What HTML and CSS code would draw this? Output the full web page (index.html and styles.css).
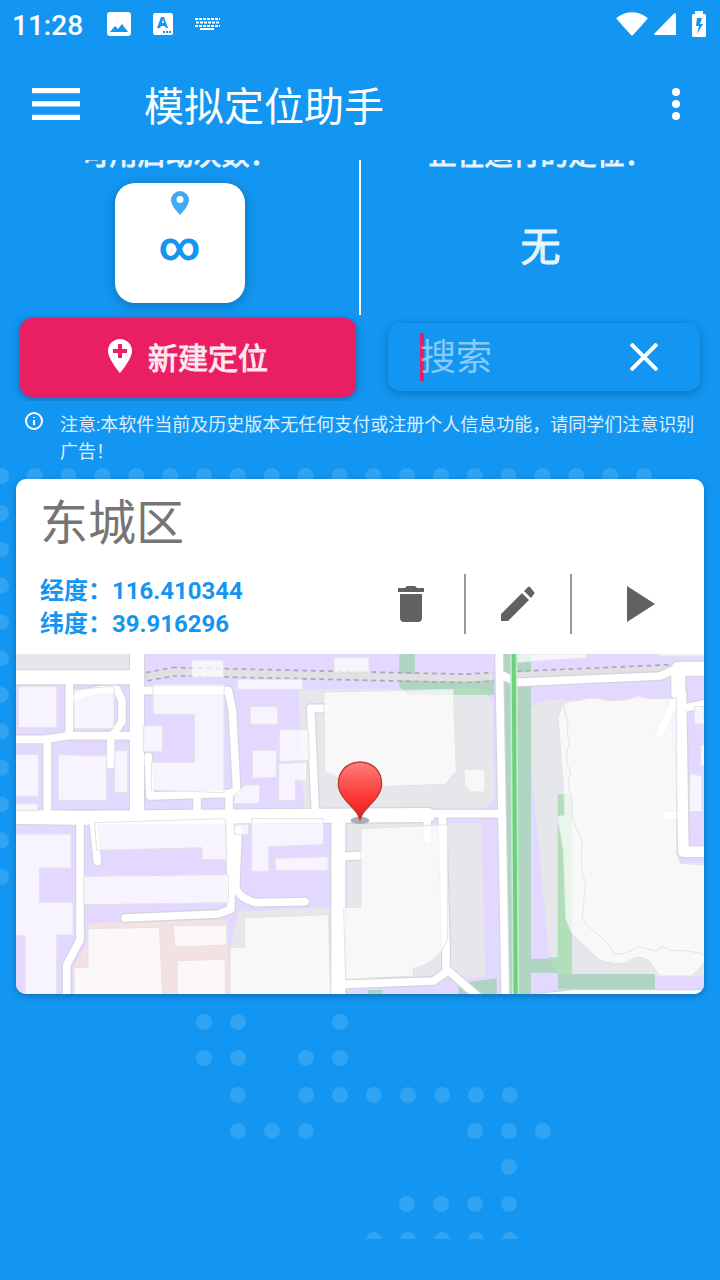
FILE: index.html
```html
<!DOCTYPE html>
<html lang="zh-CN">

<head>
  <meta charset="UTF-8">
  <meta name="viewport" content="width=device-width, initial-scale=1.0">
  <title>模拟定位助手</title>
  <link rel="stylesheet" href="styles.css">
</head>

<body>
  <!-- 背景点阵 -->
  <svg class="dots" width="720" height="1239" viewBox="0 0 720 1239" aria-hidden="true">
    <path d="M1 476H645" pathLength="647" />
    <path d="M1 513V878" pathLength="341" />
    <path d="M204 1022h35M340 1022h1M204 1058h35M306 1058h35M238 1095h1M306 1095h205M238 1131h70M475 1131h69M509 1167h1M407 1204h104M374 1240h138" />
  </svg>

  <div class="status">
    <span class="clock">11:28</span>
    <svg class="picture" width="24" height="24" viewBox="0 0 24 24">
      <path fill-rule="evenodd" d="M3 0h18a3 3 0 0 1 3 3v18a3 3 0 0 1-3 3H3a3 3 0 0 1-3-3V3a3 3 0 0 1 3-3zM3 20h18l-6-8-4 5-3-3z" />
    </svg>
    <svg class="ime" width="20" height="22" viewBox="0 0 20 22">
      <path fill-rule="evenodd" d="M2 0h16a2 2 0 0 1 2 2v18a2 2 0 0 1-2 2H2a2 2 0 0 1-2-2V2a2 2 0 0 1 2-2zM8 4L4 15h3l1-2h4l1 2h2L11 4zM9 10l1-4 1 4zM10 18v2h2v-2zM13 18v2h2v-2zM16 18v2h2v-2z" />
    </svg>
    <svg class="keyboard" width="25" height="14" viewBox="0 0 25 14">
      <path class="keys" d="M0 2h25M1 5.500h24M0 9h25" />
      <path d="M5 11h14v2H5z" />
    </svg>
    <svg class="wifi" width="32" height="24" viewBox="0 0 32 24">
      <path d="M1 5.500C10-1.500 22-1.500 31 5.500q1 1 0 2L17 23q-1 1-2 0L1 7.500q-1-1 0-2z" />
    </svg>
    <svg class="signal" width="22" height="22" viewBox="0 0 22 22">
      <path d="M20 .5q2-1 2 1V22H1q-2-1 0-2z" />
    </svg>
    <svg class="battery" width="14" height="26" viewBox="0 0 14 26">
      <path fill-rule="evenodd" d="M3 0h8v3h2l1 1v21l-1 1H1l-1-1V4l1-1h2zM5 7L4 15h3l-2 8 6-10H8l2-6z" />
    </svg>
  </div>

  <header class="toolbar">
    <button class="menu" aria-label="菜单">
      <svg width="48" height="32" viewBox="0 0 48 32">
        <path d="M0 0h48v5.300H0zM0 13.300h48v5.300H0zM0 26.700h48V32H0z" />
      </svg>
    </button>
    <h1>模拟定位助手</h1>
    <button class="more" aria-label="更多">
      <svg width="8" height="32" viewBox="0 0 8 32">
        <circle cx="4" cy="4" r="4" />
        <circle cx="4" cy="16" r="4" />
        <circle cx="4" cy="28" r="4" />
      </svg>
    </button>
  </header>

  <main>
    <section class="summary">
      <div class="col">
        <p class="label">可用启动次数：</p>
        <div class="count">
          <svg width="18" height="24" viewBox="0 0 18 24">
            <path fill-rule="evenodd" d="M9 0a9 9 0 0 1 9 9c0 6-9 15-9 15S0 15 0 9a9 9 0 0 1 9-9zM9 5a3 3 0 1 0 0 7 3 3 0 0 0 0-7z" />
          </svg>
          <span>∞</span>
        </div>
      </div>
      <div class="col">
        <p class="label">正在运行的定位：</p>
        <p class="running">无</p>
      </div>
    </section>

    <section class="actions">
      <button class="create">
        <svg width="24" height="34" viewBox="0 0 24 34">
          <path fill-rule="evenodd" d="M12 0a12 12 0 0 1 12 12c0 8-12 22-12 22S0 20 0 12A12 12 0 0 1 12 0zM10 5v5H5v4h5v5h4v-5h5v-4h-5V5z" />
        </svg>
        新建定位
      </button>
      <div class="search">
        <i class="caret"></i>
        <input type="text" placeholder="搜索" aria-label="搜索">
        <button class="clear" aria-label="清除">
          <svg width="28" height="28" viewBox="0 0 28 28">
            <path d="M1 1l26 26M27 1L1 27" />
          </svg>
        </button>
      </div>
    </section>

    <div class="notice">
      <svg width="18" height="18" viewBox="0 0 18 18">
        <circle cx="9" cy="9" r="8" />
        <path d="M9 8v5M9 5v1" />
      </svg>
      <p>注意:本软件当前及历史版本无任何支付或注册个人信息功能，请同学们注意识别广告！</p>
    </div>

    <article class="card">
      <h2>东城区</h2>
      <div class="detail">
        <p class="coords">经度：116.410344<br>纬度：39.916296</p>
        <div class="tools">
          <button aria-label="删除">
            <svg width="26" height="36" viewBox="0 0 26 36">
              <path d="M0 2h7l2-2h8l2 2h7v4H0zM2 8h22v24a4 4 0 0 1-4 4H6a4 4 0 0 1-4-4z" />
            </svg>
          </button>
          <button aria-label="编辑">
            <svg width="34" height="36" viewBox="0 0 34 36">
              <path d="M0 28L21 7l7 7L7 35H0zM23 5l4-4q1-1 2 0l4 5q1 1 0 2l-3 4z" />
            </svg>
          </button>
          <button aria-label="启动">
            <svg width="28" height="36" viewBox="0 0 28 36">
              <path d="M0 0l28 18L0 36z" />
            </svg>
          </button>
        </div>
      </div>

      <svg class="map" viewBox="48 12 2064 1020" role="img" aria-label="东城区地图">
        <defs>
          <linearGradient id="red" x1="0" y1="0" x2="0" y2="1">
            <stop offset="0" stop-color="#ff7d7a" />
            <stop offset=".6" stop-color="#fb3a37" />
            <stop offset="1" stop-color="#e02020" />
          </linearGradient>
          <g id="lanes">
            <path d="M208 100V255M40 268H135L205 257H400M142 275V490M222 145Q270 115 350 118L366 150V215L345 245 332 265V345" />
            <path d="M430 122H685L697 180 710 420 690 430 450 438 445 320M591 440V485M687 430V500M975 175H932L946 485" />
            <path d="M240 515V870L200 945V1045M280 515L292 635M690 500L693 778 655 792 375 804M714 540L707 715Q720 745 765 758L915 755" />
            <path d="M1030 620L1083 616M1281 500L1283 570M1327 495L1337 870M1030 1003L1300 993 1345 962 1440 1045M1338 870V960M1280 491H1500" />
            <path d="M1497 0L1516 1045M1505 75L1550 97 1980 78 2030 56M2050 175L2120 160M1980 250L2020 160M2000 497H2030M1600 1045L1720 1032H2120" />
          </g>
          <g id="streets">
            <path d="M411 0V500M40 82H411M40 501L240 503 1285 495M1015 500V1045M2130 56H2035V130" />
          </g>
        </defs>

        <rect class="land" x="48" y="12" width="2064" height="1020" />

        <g class="block">
          <path d="M48 12H388V58H48zM895 118H1455L1478 165 1483 440 1460 475H912zM1040 520H1444L1456 980 1040 1000zM715 785L990 772V1032H690V890z" />
          <path d="M1593 180Q1600 150 1650 150H2010L2040 640H2112V978H1717L1648 922 1593 340z" />
        </g>
        <path class="mall" d="M262 820L682 808 690 1032H222V950L262 880z" />
        <path class="park" d="M1198 12h46v78h238v44h-260l-24-24zM1508 12H1593V926H1674V972H1965V1018H1674V968H1593V1032H1508zM1376 1000L1490 985V1032H1376zM1104 1020h44v12h-44z" />
        <path class="grass" d="M1360 118H1455L1480 134H1360zM1646 922H1673V432H1716V972H1671z" />

        <path class="path-dash" d="M440 80L520 65 1080 78 1400 85 1480 80" />
        <path class="path-fill" d="M440 80L520 65 1080 78 1400 85 1480 80M1550 76L2010 58" />
        <path class="path-side" d="M1550 64L2015 44" />

        <use class="lane-edge" href="#lanes" />
        <path class="court-edge" d="M2043 130L2050 605H2130" />
        <use class="street-edge" href="#streets" />
        <use class="lane" href="#lanes" />
        <path class="court" d="M2043 130L2050 605H2130" />
        <use class="street" href="#streets" />

        <path class="rail-edge" d="M1541 0L1547 1045" />
        <path class="rail" d="M1541 0L1547 1045" />

        <g class="house">
          <path d="M55 110H170V233H55zM222 120L342 108V236H222zM40 314H115V440H40zM175 314L240 316H320V451H175zM344 302H382V428H344zM40 460H113V482H40z" />
          <path d="M575 30H671V82H575zM712 88H907V118H712zM1002 22H1107V67H1002zM459 104H672V428L454 420V337H584V193H459zM431 227H488V305H431z" />
          <path d="M750 170H832L834 223H752zM838 239H925L928 331 838 335zM757 301H829V382L757 385zM836 341L920 337V392H886V451H836zM702 437L735 405H779V461H702z" />
          <path d="M284 518L676 506 680 629H606V593L290 601zM704 523H746V554H704zM755 506H970V584L806 590V665H755zM824 625L984 620V662H828zM252 679L685 674V758L252 764z" />
          <path d="M40 552H213V654H118V757H219V855H170V1032H75V857H40zM264 836L478 832 488 1040H222V953H264zM520 828L680 825V885L524 891zM531 932L676 928V1040H531z" />
          <path d="M733 803L985 794 992 1040H690V892H733zM972 126L1360 118 1369 365 1355 380 1338 403 1080 412 974 365zM1392 358H1455V426H1412L1395 408z" />
          <path d="M1083 536L1343 524V870Q1310 945 1240 955V978L1037 988 1031 772H1083z" />
          <path d="M1553 12H1760V24L1553 37zM1975 12H2112V18H1975zM2083 170H2112V222H2083zM2102 285H2120V347H2102zM2070 370L2105 378V485H2068z" />
          <path d="M1690 160Q1720 150 1740 152 1780 135 1820 152H1860Q1900 145 1913 137 1940 152 2030 143V610L2040 640 2120 645V930L2075 978H1980L1945 930Q1910 910 1880 938 1850 948 1795 928L1715 850 1697 805 1690 600 1672 500 1694 495 1692 432 1674 200z" />
          <path class="contour" d="M1694 160Q1690 180 1705 220 1697 235 1709 280 1688 320 1712 370 1697 400 1717 450 1707 500 1747 575 1737 655 1757 700 1750 760 1747 800C1750 835 1800 840 1845 912Q1880 914 1915 890L1970 904Q1985 878 2010 902 2065 898 2112 914" />
        </g>

        <ellipse class="marker-shadow" cx="1080" cy="511" rx="28" ry="11" />
        <path class="marker" d="M1080 336C1119 336 1145 364 1145 402 1145 445 1090 475 1084 500L1080 510 1076 500C1070 475 1015 445 1015 402 1015 364 1041 336 1080 336z" />
      </svg>
    </article>
  </main>
</body>

</html>
```
FILE: styles.css
```css
* {
  margin: 0;
  padding: 0;
  box-sizing: border-box;
}

body {
  min-height: 100vh;
  background: #1296f1;
  color: #fff;
  font-family: Roboto, "Noto Sans CJK SC", sans-serif;
  position: relative;
}

button {
  border: none;
  background: none;
  color: inherit;
  font: inherit;
  cursor: pointer;
}

svg {
  display: block;
  flex: none;
  fill: currentColor;
}

/* 背景点阵 */
.dots {
  position: absolute;
  top: 0;
  left: 0;
  z-index: -1;
}

.dots path {
  fill: none;
  stroke: rgba(255, 255, 255, .13);
  stroke-width: 16;
  stroke-linecap: round;
  stroke-dasharray: 0 34;
}

/* 状态栏 */
.status {
  height: 48px;
  padding: 0 14px 0 12px;
  display: flex;
  align-items: center;
}

.clock {
  padding-top: 2px;
  font-size: 28px;
  font-weight: 500;
  margin-right: 24px;
}

.picture {
  margin-right: 22px;
}

.ime {
  margin-right: 22px;
}

.keys {
  stroke: #fff;
  stroke-width: 2;
  stroke-dasharray: 3 1;
}

.wifi {
  margin-left: auto;
  margin-right: 6px;
}

.signal {
  margin-right: 16px;
}

/* 标题栏 */
.toolbar {
  height: 112px;
  padding: 0 40px 0 32px;
  display: flex;
  align-items: center;
}

.toolbar h1 {
  flex: 1;
  margin-left: 64px;
  font-size: 40px;
  font-weight: 400;
}

/* 统计 */
.summary {
  height: 155px;
  display: flex;
  overflow: hidden;
}

.col {
  flex: 1;
  display: flex;
  flex-direction: column;
  align-items: center;
}

.col + .col {
  border-left: 2px solid #fff;
}

.label,
.running,
.create {
  font-weight: 400;
  -webkit-text-stroke: 1px currentColor;
}

.label {
  margin-top: -26px;
  line-height: 44px;
  font-size: 28px;
  opacity: .9;
}

.count {
  width: 130px;
  height: 120px;
  margin-top: 5px;
  padding-top: 8px;
  border-radius: 20px;
  background: #fff;
  color: #1296f1;
  box-shadow: 0 2px 12px rgba(0, 0, 0, .25);
  display: flex;
  flex-direction: column;
  align-items: center;
}

.count svg {
  opacity: .8;
}

.count span {
  line-height: 64px;
  font-size: 40px;
  font-weight: 700;
}

.running {
  line-height: 140px;
  font-size: 40px;
  opacity: .9;
}

/* 操作 */
.actions {
  padding: 3px 20px 4px;
  display: grid;
  grid-template-columns: 14fr 13fr;
  gap: 32px;
  overflow: hidden;
}

.create {
  height: 79px;
  padding-bottom: 3px;
  border-radius: 12px;
  background: #e91e63;
  color: #fde8ef;
  font-size: 30px;
  box-shadow: 0 2px 8px rgba(0, 0, 0, .3);
  display: flex;
  align-items: center;
  justify-content: center;
  gap: 16px;
}

.create svg {
  fill: #fff;
}

.search {
  min-width: 0;
  height: 68px;
  margin-top: 5px;
  padding: 0 42px 0 32px;
  border-radius: 12px;
  box-shadow: 0 2px 8px rgba(0, 0, 0, .25);
  display: flex;
  align-items: center;
}

.caret {
  width: 4px;
  height: 48px;
  margin-right: -4px;
  background: #e91e63;
}

.search input {
  flex: 1;
  min-width: 0;
  height: 54px;
  padding-top: 2px;
  border: none;
  outline: none;
  background: none;
  color: #fff;
  font: inherit;
  font-size: 36px;
}

.search input::placeholder {
  color: rgba(255, 255, 255, .5);
}

.clear path {
  stroke: #fff;
  stroke-width: 4;
}

/* 提示 */
.notice {
  padding: 10px 20px 14px 25px;
  display: flex;
  gap: 17px;
}

.notice svg {
  margin-top: 1px;
  fill: none;
  stroke: #fff;
  stroke-width: 2;
}

.notice p {
  line-height: 27px;
  font-size: 18px;
  opacity: .85;
}

/* 定位卡片 */
.card {
  margin: 0 16px;
  border-radius: 10px;
  overflow: hidden;
  background: #fff;
  box-shadow: 0 2px 6px rgba(0, 0, 0, .25);
}

.card h2 {
  padding: 10px 24px 0;
  line-height: 70px;
  color: #757575;
  font-size: 48px;
  font-weight: 400;
}

.detail {
  height: 95px;
  padding: 0 24px;
  display: flex;
  justify-content: space-between;
}

.coords {
  padding-top: 16px;
  line-height: 33px;
  color: #1296f1;
  font-size: 24px;
  font-weight: 700;
}

.tools {
  height: 60px;
  margin-top: 15px;
  color: #616161;
  display: flex;
}

.tools button {
  width: 106px;
  display: flex;
  align-items: center;
  justify-content: center;
}

.tools button + button {
  border-left: 2px solid #999;
}

.tools button:last-child {
  width: 110px;
  padding-left: 30px;
}

/* 地图 */
.map {
  width: 100%;
  height: auto;
}

.land {
  fill: #e3d8ff;
}

.block {
  fill: #e6e7ea;
}

.mall {
  fill: #f4e1e4;
}

.park {
  fill: #afd5c2;
}

.grass {
  fill: #b1dfb9;
}

.path-dash {
  fill: none;
  stroke: #a9a9b0;
  stroke-width: 30;
  stroke-dasharray: 14 12;
}

.path-fill {
  fill: none;
  stroke: #e1e1e3;
  stroke-width: 20;
}

.path-side {
  stroke: #a9a9b0;
  stroke-width: 5;
  stroke-dasharray: 14 12;
}

.lane,
.lane-edge,
.street,
.street-edge,
.court,
.court-edge {
  fill: none;
  stroke: #fff;
  stroke-linecap: round;
  stroke-linejoin: round;
}

.lane {
  stroke-width: 23;
}

.street {
  stroke-width: 42;
}

.court {
  stroke-width: 32;
}

.lane-edge {
  stroke: #d3d4dd;
  stroke-width: 30;
}

.street-edge {
  stroke: #d3d4dd;
  stroke-width: 49;
}

.court-edge {
  stroke: #d3d4dd;
  stroke-width: 40;
}

.rail-edge {
  stroke: #c5ead0;
  stroke-width: 22;
}

.rail {
  stroke: #6bd17b;
  stroke-width: 12;
}

.house {
  fill: rgba(255, 255, 255, .72);
  stroke: #e3e3e6;
  stroke-width: 3;
}

.contour {
  fill: none;
}

.marker-shadow {
  fill: #a9adb5;
}

.marker {
  fill: url(#red);
  stroke: #b8393a;
  stroke-width: 4;
}
```
